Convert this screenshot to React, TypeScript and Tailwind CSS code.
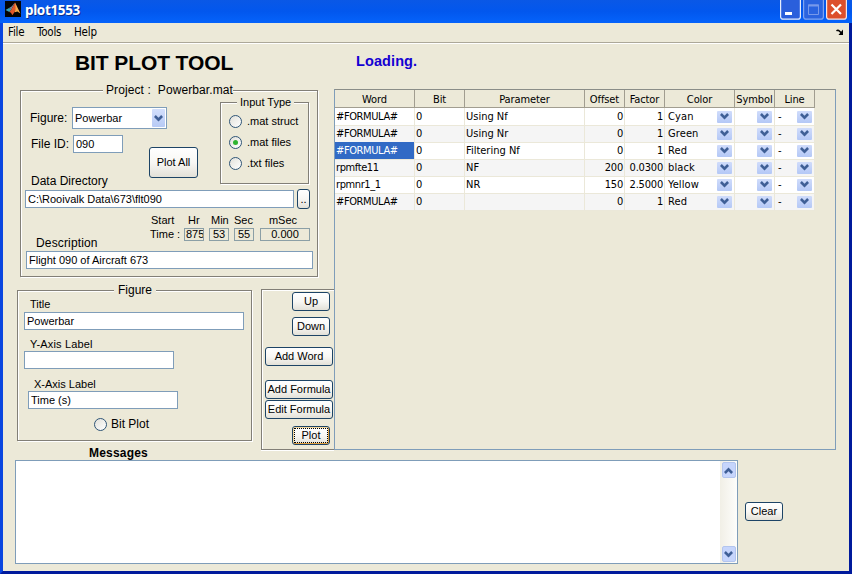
import React from "react";

const TAHOMA = "font-['DejaVu_Sans_Condensed','DejaVu_Sans',sans-serif]";
const ETCHED =
  "border border-[#827f77] shadow-[1px_1px_0_#fff,inset_1px_1px_0_#fff]";

function Chevron({ up = false }: { up?: boolean }) {
  return (
    <svg width="9" height="7" viewBox="0 0 9 7" fill="none" className={up ? "rotate-180" : ""}>
      <path d="M.9 1 4.5 4.600 8.100 1" stroke="#3f5f96" strokeWidth="2.6" />
    </svg>
  );
}

function Field({ className, children }: { className: string; children?: React.ReactNode }) {
  return (
    <div
      className={`flex items-center overflow-hidden whitespace-nowrap border border-[#7f9db9] bg-white pl-[2px] text-[11px] leading-[13px] ${className}`}
    >
      {children}
    </div>
  );
}

function TimeBox({ className, children }: { className: string; children: React.ReactNode }) {
  return (
    <div
      className={`flex h-[13px] items-center overflow-hidden whitespace-nowrap border border-[#8b9fa6] text-[11px] leading-[11px] ${className}`}
    >
      {children}
    </div>
  );
}

function Button({ className, children }: { className: string; children: React.ReactNode }) {
  return (
    <button
      className={`flex shrink-0 items-center justify-center whitespace-nowrap rounded-[3px] border border-[#1d4466] bg-linear-to-b from-white via-[#f8f7f4] to-[#e3e1d8] text-[11px] leading-[13px] ${className}`}
    >
      {children}
    </button>
  );
}

function Radio({ checked = false }: { checked?: boolean }) {
  return (
    <span className="flex size-[13px] shrink-0 items-center justify-center rounded-full border border-[#2f5577] bg-linear-to-br from-[#e2e1da] to-white">
      {checked && <span className="size-[5px] rounded-full bg-[#2fb42f]" />}
    </span>
  );
}

function Legend({ className, children }: { className: string; children: React.ReactNode }) {
  return (
    <div className={`w-fit whitespace-pre bg-[#ece9d8] ${className}`}>{children}</div>
  );
}

function TitleBar() {
  return (
    <div className="flex h-[23px] shrink-0 bg-linear-to-b from-[#0a58e6] via-[#0257ee] to-[#0563fb]">
      <svg width="16" height="16" viewBox="0 0 16 16" className="ml-[5px] mt-[1px]">
        <rect width="16" height="16" fill="#050505" />
        <path d="M0.5 9 4 7 6.5 8.3 4.4 11Z" fill="#3aa5b8" />
        <path d="M4 7 6.6 5.4 10 1.5 6.5 8.3Z" fill="#7c8ea0" />
        <path d="M4.4 11 6.5 8.3 10 1.5 11.6 6 10 10.5 7.3 14.3 6 11.7Z" fill="#e0572a" />
        <path d="M10 1.5 12 5.5 15.4 12.6 12.4 10.5 9.8 11.3 10.6 7Z" fill="#f6a94a" />
      </svg>
      <span className="ml-[4px] mt-[2px] font-['Noto_Sans',sans-serif] text-[13.5px] font-bold leading-[16px] tracking-[-0.35px] text-white [text-shadow:1px_1px_0_#0a2f8c]">
        plot1553
      </span>
      <div className="ml-auto mr-[5px] flex gap-[2px]">
        <svg width="21" height="20" viewBox="0 0 21 20">
          <rect x=".6" y="-2" width="19.8" height="21.2" rx="2.5" fill="#2a5fdc" stroke="#e8eefc" strokeWidth="1.2" />
          <rect x="5" y="12" width="7" height="3" fill="#fff" />
        </svg>
        <svg width="21" height="20" viewBox="0 0 21 20">
          <rect x=".6" y="-2" width="19.8" height="21.2" rx="2.5" fill="#2a63df" stroke="#7fa4f0" strokeWidth="1.2" />
          <path d="M5.5 5h10v9.500h-10z" fill="none" stroke="#7799ea" />
          <path d="M5 5.500h11" stroke="#7799ea" strokeWidth="2" />
        </svg>
        <svg width="21" height="20" viewBox="0 0 21 20">
          <rect x=".6" y="-2" width="19.8" height="21.2" rx="2.5" fill="#dc4f2c" stroke="#f4e6e6" strokeWidth="1.2" />
          <path d="M5.500 4.500 15 14M15 4.500 5.500 14" stroke="#fff" strokeWidth="2.2" />
        </svg>
      </div>
    </div>
  );
}

function MenuBar() {
  return (
    <div className={`flex h-[20px] shrink-0 items-center border-b border-[#aca899] pl-[5px] text-[11.5px] tracking-[-0.2px] ${TAHOMA}`}>
      <span className="w-[29px]">File</span>
      <span className="w-[37px]">Tools</span>
      <span>Help</span>
      <svg width="8" height="7" viewBox="0 0 8 7" className="ml-auto mr-[5px]">
        <path d="M.5 2C2 .5 3 1.500 5.500 4" stroke="#000" strokeWidth="1.500" fill="none" />
        <path d="M7 .5V6H2.500Z" fill="#000" />
      </svg>
    </div>
  );
}

function ProjectPanel() {
  return (
    <div className={`ml-[17px] flex h-[187px] w-[298px] shrink-0 flex-col ${ETCHED}`}>
      <Legend className="-mt-[8px] ml-[82px] h-[14px] pl-[3px] text-[12px] leading-[14px] tracking-[0.1px]">
        {"Project :  Powerbar.mat"}
      </Legend>
      <div className="flex h-[77px] shrink-0">
        <div className="flex w-[199px] shrink-0 flex-col pt-[10px]">
          <div className="flex h-[22px] items-center pl-[9px]">
            <span className="w-[42px] text-[12px]">Figure:</span>
            <Field className="h-[22px] w-[95px] justify-between">
              <span className="pt-[1px]">Powerbar</span>
              <span className="mr-px flex h-[18px] w-[13px] items-center justify-center rounded-[1px] bg-linear-to-b from-[#d3dffc] to-[#b7caf5]">
                <Chevron />
              </span>
            </Field>
          </div>
          <div className="flex pl-[10px]">
            <div className="mt-[6px] flex h-[18px] items-center self-start">
              <span className="w-[42px] text-[12px]">File ID:</span>
              <Field className="h-[18px] w-[50px]">090</Field>
            </div>
            <Button className="ml-[26px] mt-[18px] h-[31px] w-[49px]">Plot All</Button>
          </div>
        </div>
        <div className={`mt-[5px] h-[82px] w-[89px] ${ETCHED}`}>
          <Legend className="-mt-[7px] ml-[16px] h-[13px] px-[3px] text-[11px] leading-[13px]">
            Input Type
          </Legend>
          <div className="flex flex-col gap-[8px] pl-[8px] pt-[6px] text-[11px] leading-[13px]">
            <label className="flex items-center gap-[5px]"><Radio />.mat struct</label>
            <label className="flex items-center gap-[5px]"><Radio checked />.mat files</label>
            <label className="flex items-center gap-[5px]"><Radio />.txt files</label>
          </div>
        </div>
      </div>
      <div className="ml-[10px] h-[14px] w-fit text-[12px] leading-[14px]">Data Directory</div>
      <div className="ml-[4px] mt-px flex gap-[3px]">
        <Field className="mt-px h-[18px] w-[269px]">C:\Rooivalk Data\673\flt090</Field>
        <Button className="h-[20px] w-[13px]">..</Button>
      </div>
      <div className="flex">
        <div className="mt-[27px] w-[128px] pl-[15px] text-[12px] leading-[14px] tracking-[0.15px]">Description</div>
        <div className="mt-[5px] text-[11px]">
          <div className="flex h-[13px] leading-[13px]">
            <span className="w-[33px] pl-[2px]">Start</span>
            <span className="w-[25px] pl-[6px]">Hr</span>
            <span className="w-[25px] pl-[4px]">Min</span>
            <span className="w-[25px] pl-[2px]">Sec</span>
            <span className="w-[52px] text-center">mSec</span>
          </div>
          <div className="mt-px flex h-[13px] leading-[13px]">
            <span className="w-[35px] pl-[1px]">Time :</span>
            <TimeBox className="mr-[5px] w-[20px] pl-px">875</TimeBox>
            <TimeBox className="mr-[5px] w-[20px] justify-center">53</TimeBox>
            <TimeBox className="mr-[6px] w-[20px] justify-center">55</TimeBox>
            <TimeBox className="w-[50px] justify-center">0.000</TimeBox>
          </div>
        </div>
      </div>
      <Field className="ml-[5px] mt-px h-[18px] w-[287px] shrink-0">Flight 090 of Aircraft 673</Field>
    </div>
  );
}

function FigurePanel() {
  return (
    <div className={`ml-[14px] flex h-[151px] w-[235px] shrink-0 flex-col ${ETCHED}`}>
      <Legend className="-mt-[8px] ml-[96px] h-[14px] px-[4px] text-[12px] leading-[14px]">
        Figure
      </Legend>
      <div className="ml-[12px] mt-[1px] h-[13px] text-[11px] leading-[13px]">Title</div>
      <Field className="ml-[6px] mt-[1px] h-[18px] w-[220px]">Powerbar</Field>
      <div className="ml-[12px] mt-[8px] h-[13px] text-[11px] leading-[13px] tracking-[0.15px]">Y-Axis Label</div>
      <Field className="ml-[6px] h-[18px] w-[150px]" />
      <div className="ml-[16px] mt-[9px] h-[13px] text-[11px] leading-[13px]">X-Axis Label</div>
      <Field className="ml-[10px] h-[18px] w-[150px]">Time (s)</Field>
      <label className="ml-[76px] mt-[8px] flex items-center gap-[4px] text-[12px] leading-[14px]">
        <Radio />
        Bit Plot
      </label>
    </div>
  );
}

function ActionPanel() {
  return (
    <div className="ml-[9px] flex h-[161px] w-[73px] shrink-0 flex-col items-end border-y border-l border-[#827f77] pt-[2px] shadow-[0_1px_0_#fff,inset_1px_1px_0_#fff]">
      <Button className="mr-[4px] h-[19px] w-[38px]">Up</Button>
      <Button className="mr-[4px] mt-[6px] h-[19px] w-[38px]">Down</Button>
      <Button className="mr-[1px] mt-[11px] h-[19px] w-[68px]">Add Word</Button>
      <Button className="mr-[1px] mt-[14px] h-[19px] w-[68px]">Add Formula</Button>
      <Button className="mr-[1px] mt-px h-[19px] w-[68px]">Edit Formula</Button>
      <Button className="mr-[4px] mt-[7px] h-[19px] w-[38px] shadow-[inset_-1px_-1px_0_#e0a040,inset_1px_1px_0_#f5d79a]">
        <span className="flex h-[15px] w-[34px] items-center justify-center border border-dotted border-black">
          Plot
        </span>
      </Button>
    </div>
  );
}

type Row = [string, string, string, string, string, string, string];

const ROWS: Row[] = [
  ["#FORMULA#", "0", "Using Nf", "0", "1", "Cyan", "-"],
  ["#FORMULA#", "0", "Using Nr", "0", "1", "Green", "-"],
  ["#FORMULA#", "0", "Filtering Nf", "0", "1", "Red", "-"],
  ["rpmfte11", "0", "NF", "200", "0.0300", "black", "-"],
  ["rpmnr1_1", "0", "NR", "150", "2.5000", "Yellow", "-"],
  ["#FORMULA#", "0", "", "0", "1", "Red", "-"],
];

const HEADERS = ["Word", "Bit", "Parameter", "Offset", "Factor", "Color", "Symbol", "Line"];
const GRID = "grid grid-cols-[80px_50px_120px_40px_40px_70px_40px_40px] w-[480px]";

function DropCell({ children }: { children?: React.ReactNode }) {
  return (
    <div className="flex items-center justify-between border-b border-r border-[#ebe8d9] pl-[3px] pr-[2px]">
      <span className="pt-px tracking-[0.1px]">{children}</span>
      <span className="flex h-[12px] w-[15px] items-center justify-center rounded-[1px] bg-linear-to-b from-[#d0dcfb] to-[#b4c8f6]">
        <Chevron />
      </span>
    </div>
  );
}

function DataTable() {
  return (
    <div className={`h-[361px] w-[502px] border border-[#7f9db9] border-t-[#8a8d88] text-[11px] leading-[16px] ${TAHOMA}`}>
      <div className={`${GRID} h-[18px] border-b border-[#a19d90]`}>
        {HEADERS.map((h) => (
          <div key={h} className="border-r border-[#a19d90] pt-px text-center leading-[17px] tracking-[-0.1px]">
            {h}
          </div>
        ))}
      </div>
      {ROWS.map(([word, bit, param, offset, factor, color, line], i) => {
        const cell = "border-b border-r border-[#ebe8d9] pl-px pt-px whitespace-nowrap overflow-hidden";
        return (
          <div key={i} className={`${GRID} h-[17px] ${i % 2 ? "bg-[#f5f5f5]" : "bg-white"}`}>
            <div className={`${cell} tracking-[-0.4px] ${i === 2 ? "bg-[#316ac5] text-white" : ""}`}>{word}</div>
            <div className={cell}>{bit}</div>
            <div className={cell}>{param}</div>
            <div className={`${cell} pr-px text-right tracking-[-0.2px]`}>{offset}</div>
            <div className={`${cell} pr-px text-right tracking-[-0.2px]`}>{factor}</div>
            <DropCell>{color}</DropCell>
            <DropCell />
            <DropCell>{line}</DropCell>
          </div>
        );
      })}
    </div>
  );
}

function Messages() {
  return (
    <div className="ml-[12px] mt-[9px] flex">
      <div className="flex h-[104px] w-[723px] justify-end border border-[#7f9db9] bg-white">
        <div className="flex w-[17px] flex-col items-center justify-between bg-linear-to-r from-[#f1efe6] to-[#fdfdfb] py-px">
          <span className="flex h-[16px] w-[14px] items-center justify-center rounded-[2px] border border-[#b3c5ee] bg-[#c6d5fc]">
            <Chevron up />
          </span>
          <span className="flex h-[16px] w-[14px] items-center justify-center rounded-[2px] border border-[#b3c5ee] bg-[#c6d5fc]">
            <Chevron />
          </span>
        </div>
      </div>
      <Button className="ml-[7px] mt-[42px] h-[19px] w-[38px]">Clear</Button>
    </div>
  );
}

export default function App() {
  return (
    <div className="flex h-[574px] w-[852px] flex-col overflow-hidden bg-[#ece9d8] font-['Liberation_Sans',Arial,sans-serif] text-black">
      <TitleBar />
      <div className="flex min-h-0 flex-1 flex-col border-b-[3px] border-l-[3px] border-r-[3px] border-b-[#001a9c] border-l-[#0a46e0] border-r-[#001a9c]">
        <MenuBar />
        <div className="flex h-[408px] shrink-0 border-t border-white">
          <div className="flex w-[331px] shrink-0 flex-col">
            <h1 className="ml-[72px] mt-[7px] h-[24px] whitespace-nowrap text-[21px] font-bold leading-[24px] tracking-[-0.1px]">
              BIT PLOT TOOL
            </h1>
            <div className="mt-[15px]">
              <ProjectPanel />
            </div>
            <div className="mt-[12px] flex">
              <div className="mt-px">
                <FigurePanel />
                <div className="ml-[86px] mt-[5px] h-[14px] text-[12px] font-bold leading-[14px] tracking-[0.2px]">Messages</div>
              </div>
              <ActionPanel />
            </div>
          </div>
          <div className="flex flex-col">
            <div className="mb-[20px] ml-[22px] mt-[9px] h-[16px] text-[14.5px] font-bold leading-[16px] tracking-[0.1px] text-[#1400d2]">
              Loading.
            </div>
            <DataTable />
          </div>
        </div>
        <Messages />
      </div>
    </div>
  );
}
